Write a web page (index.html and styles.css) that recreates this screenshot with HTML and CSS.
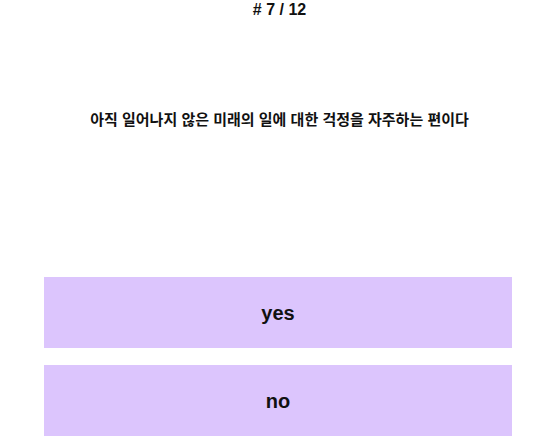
FILE: index.html
```html
<!DOCTYPE html>
<html lang="ko">
<head>
  <meta charset="UTF-8">
  <meta name="viewport" content="width=device-width, initial-scale=1.0">
  <title>Test</title>
  <link rel="stylesheet" href="styles.css">
</head>
<body>
  <main class="quiz">
    <h1 class="quiz-count"># 7 / 12</h1>
    <p class="quiz-question">아직 일어나지 않은 미래의 일에 대한 걱정을 자주하는 편이다</p>
    <div class="quiz-answers">
      <button class="answer-btn">yes</button>
      <button class="answer-btn">no</button>
    </div>
  </main>
</body>
</html>
```

FILE: styles.css
```css
*, *::before, *::after {
  margin: 0;
  padding: 0;
  box-sizing: border-box;
}

body {
  font-family: "Liberation Sans", Arial, "Noto Sans CJK KR", sans-serif;
  background-color: #fff;
  color: #111;
}

.quiz {
  display: flex;
  flex-direction: column;
  align-items: center;
  padding-top: 0;
}

.quiz-count {
  font-size: 16px;
  font-weight: bold;
  line-height: 20px;
}

.quiz-question {
  margin-top: 88px;
  font-family: "Noto Sans CJK KR", sans-serif;
  font-size: 15px;
  font-weight: bold;
  line-height: 22px;
}

.quiz-answers {
  margin-top: 147px;
  margin-right: 3px;
  width: 468px;
  display: flex;
  flex-direction: column;
  gap: 17px;
}

.answer-btn {
  height: 71px;
  padding-top: 2px;
  border: none;
  background-color: #dcc5fd;
  color: #111;
  font-family: "Liberation Sans", Arial, sans-serif;
  font-size: 20px;
  font-weight: bold;
  cursor: pointer;
}

.answer-btn:hover {
  background-color: #d2b6fb;
}
```
